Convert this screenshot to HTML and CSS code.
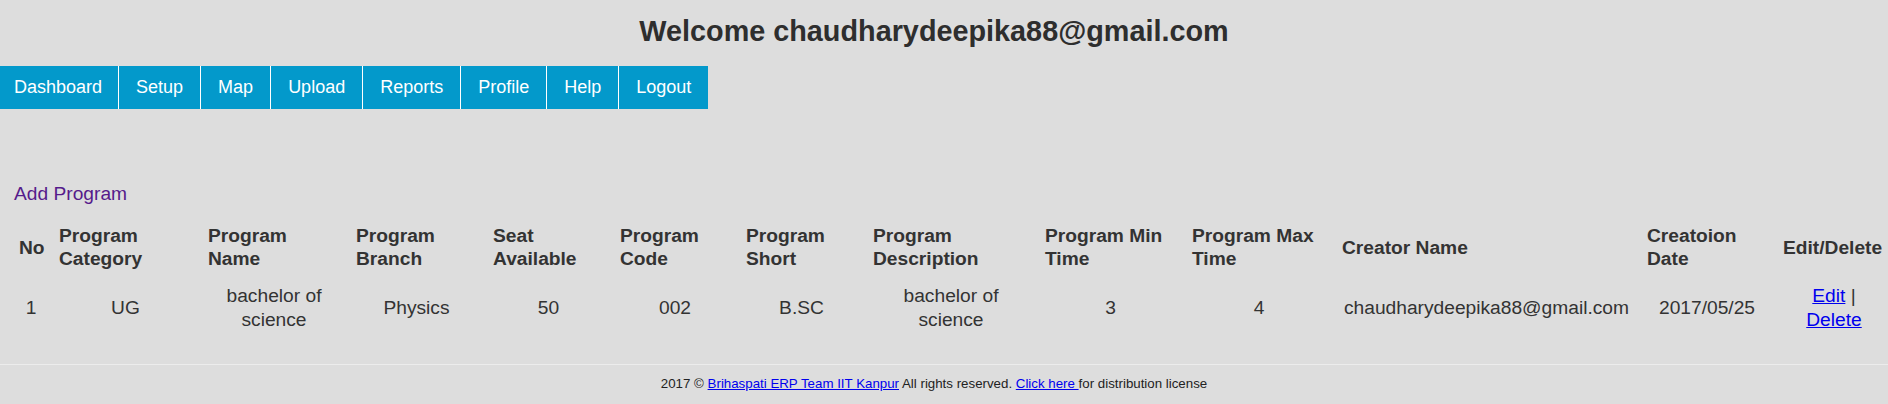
FILE: index.html
```html
<!DOCTYPE html>
<html lang="en">
<head>
<meta charset="utf-8">
<title>Programs</title>
<link rel="stylesheet" href="styles.css">
</head>
<body>
<header class="top">
  <h1 class="welcome">Welcome chaudharydeepika88@gmail.com</h1>
</header>
<nav class="menu">
  <a href="#">Dashboard</a>
  <a href="#">Setup</a>
  <a href="#">Map</a>
  <a href="#">Upload</a>
  <a href="#">Reports</a>
  <a href="#">Profile</a>
  <a href="#">Help</a>
  <a href="#">Logout</a>
</nav>
<main class="content">
  <a class="add-link" href="#">Add Program</a>
  <table class="programs">
    <colgroup>
      <col class="c-no"><col class="c-cat"><col class="c-name"><col class="c-branch">
      <col class="c-seat"><col class="c-code"><col class="c-short"><col class="c-desc">
      <col class="c-min"><col class="c-max"><col class="c-creator"><col class="c-date"><col class="c-edit">
    </colgroup>
    <thead>
      <tr>
        <th>No</th>
        <th>Program Category</th>
        <th>Program Name</th>
        <th>Program Branch</th>
        <th>Seat Available</th>
        <th>Program Code</th>
        <th>Program Short</th>
        <th>Program Description</th>
        <th>Program Min Time</th>
        <th>Program Max Time</th>
        <th>Creator Name</th>
        <th>Creatoion Date</th>
        <th>Edit/Delete</th>
      </tr>
    </thead>
    <tbody>
      <tr>
        <td>1</td>
        <td>UG</td>
        <td>bachelor of science</td>
        <td>Physics</td>
        <td>50</td>
        <td>002</td>
        <td>B.SC</td>
        <td>bachelor of science</td>
        <td>3</td>
        <td>4</td>
        <td>chaudharydeepika88@gmail.com</td>
        <td>2017/05/25</td>
        <td><a class="row-link" href="#">Edit</a> | <a class="row-link" href="#">Delete</a></td>
      </tr>
    </tbody>
  </table>
</main>
<footer class="site-footer">
  <p class="copy">2017 © <a href="#">Brihaspati ERP Team IIT Kanpur</a> All rights reserved. <a href="#">Click here </a>for distribution license</p>
</footer>
</body>
</html>
```
FILE: styles.css
```css
html, body {
  margin: 0;
  padding: 0;
}
body {
  background: #dddddd;
  font-family: "Liberation Sans", Arial, sans-serif;
  color: #333333;
  overflow-x: hidden;
}
.top {
  padding: 15px 20px 0 0;
  text-align: center;
}
.welcome {
  margin: 0;
  font-size: 28.8px;
  line-height: 33px;
  font-weight: bold;
  color: #2e2e2e;
}
.menu {
  display: inline-flex;
  margin-top: 18px;
  height: 43px;
  background: #0399cb;
  vertical-align: top;
}
.menu a {
  display: block;
  padding: 0 17px;
  line-height: 43px;
  font-size: 18px;
  color: #ffffff;
  text-decoration: none;
  border-right: 1px solid #ffffff;
}
.menu a:first-child {
  padding-left: 14px;
  padding-right: 16px;
}
.menu a:last-child {
  border-right: none;
}
.content {
  padding: 0 0 0 11px;
}
.add-link {
  display: block;
  margin: 74px 0 0 3px;
  font-size: 19.2px;
  line-height: 22px;
  color: #551a8b;
  text-decoration: none;
}
.programs {
  margin-top: 14px;
  table-layout: fixed;
  width: 1882px;
  border-collapse: collapse;
  font-size: 19.2px;
}
.c-no { width: 40px; }
.c-cat { width: 149px; }
.c-name { width: 148px; }
.c-branch { width: 137px; }
.c-seat { width: 127px; }
.c-code { width: 126px; }
.c-short { width: 127px; }
.c-desc { width: 172px; }
.c-min { width: 147px; }
.c-max { width: 150px; }
.c-creator { width: 305px; }
.c-date { width: 136px; }
.c-edit { width: 118px; }
.programs th {
  padding: 5px 8px 8px;
  line-height: 23px;
  text-align: left;
  vertical-align: middle;
  font-weight: bold;
  color: #333333;
}
.programs th:last-child {
  padding-right: 0;
  white-space: nowrap;
}
.programs td {
  padding: 6px 8px;
  line-height: 24px;
  text-align: center;
  vertical-align: middle;
  color: #333333;
}
.row-link {
  color: #0000ee;
  text-decoration: underline;
}
.site-footer {
  margin-top: 26px;
  border-top: 1px solid #ececec;
  padding: 11px 20px 0 0;
  text-align: center;
}
.copy {
  margin: 0;
  font-size: 13.3px;
  line-height: 16px;
  color: #222222;
}
.copy a {
  color: #0000ee;
  text-decoration: underline;
}
```
